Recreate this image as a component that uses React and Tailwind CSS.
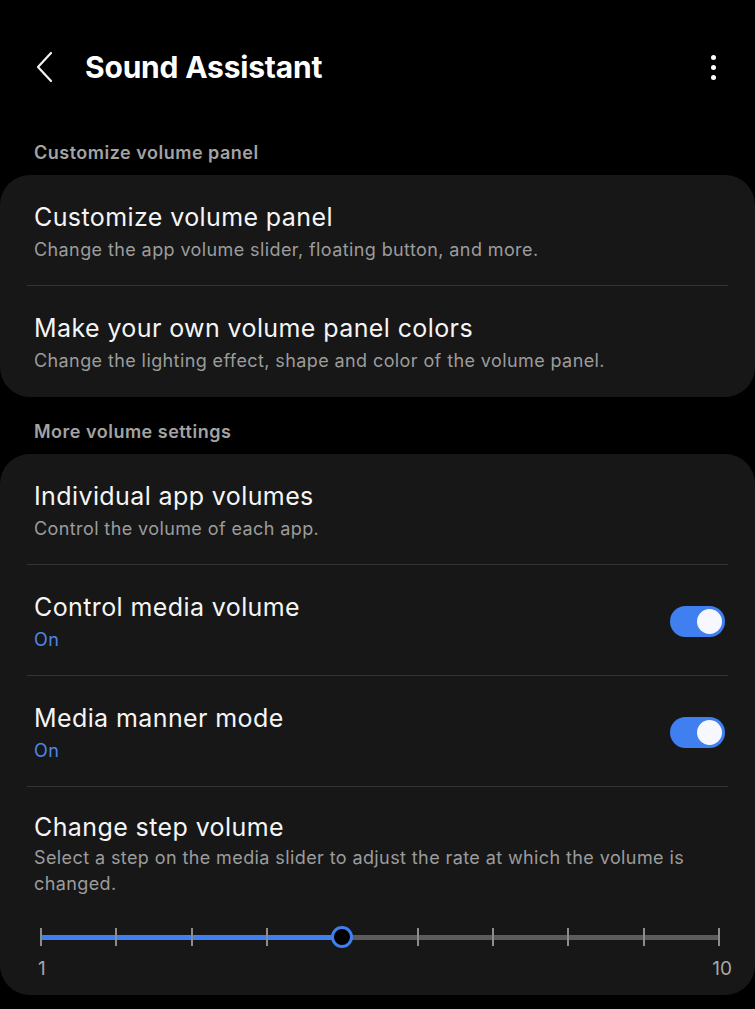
import React from "react";

const font = { fontFamily: "Inter, 'Noto Sans', sans-serif" };

const Toggle = () => (
  <div className="w-[55px] h-[31px] rounded-full bg-[#3f7ff0] flex items-center justify-end pr-[3px] shrink-0 -mt-[4px]">
    <div className="w-[25px] h-[25px] rounded-full bg-[#f7f8ff]" />
  </div>
);

const Row = ({ title, sub, on, divider = true }) => (
  <div className="mx-[27px]">
    <div
      className={
        divider
          ? "flex items-center justify-between pl-[7px] pr-[3px] pt-[25px] pb-[19px]"
          : "flex items-center justify-between pl-[7px] pr-[3px] pt-[25px] pb-[20px]"
      }
    >
      <div>
        <div className="text-[25px] leading-[34px] tracking-[0.4px] text-[#f5f5f5]">{title}</div>
        {sub && (
          <div className="text-[18px] leading-[32px] tracking-[0.4px] text-[#9c9c9c]">{sub}</div>
        )}
        {on && <div className="text-[18px] leading-[32px] tracking-[0.4px] text-[#4f86e6]">On</div>}
      </div>
      {on && <Toggle />}
    </div>
    {divider && <div className="h-px bg-[#333333]" />}
  </div>
);

const ticks = [0, 1, 2, 3, 4, 5, 6, 7, 8, 9];

const StepSlider = () => (
  <div className="pl-[13px] pr-[8px]">
    <div className="relative h-[20px] flex items-center">
      <div className="absolute left-0 right-0 h-[5px] bg-[#5c5c5c] rounded-full" />
      <div className="absolute left-0 w-[44.4%] h-[5px] bg-[#3f7ff0] rounded-full" />
      <div className="relative w-full flex justify-between">
        {ticks.map((t) => (
          <div key={t} className="w-[2px] h-[18px] bg-[#8c8c8c]" />
        ))}
      </div>
      <div className="absolute left-[44.4%] -ml-[11px] w-[22px] h-[22px] rounded-full border-[3px] border-[#3f7ff0] bg-black" />
    </div>
    <div className="flex justify-between mt-[11px] text-[19px] leading-[22px] text-[#a6a6a6] -mr-[12px]">
      <span className="-ml-[2px]">1</span>
      <span>10</span>
    </div>
  </div>
);

export default function App() {
  return (
    <div className="min-h-[1009px] bg-black" style={font}>
      <div className="h-[134px] flex items-center justify-between pl-[35px] pr-[39px]">
        <div className="flex items-center">
          <svg width="20" height="32" viewBox="0 0 20 32" fill="none">
            <path d="M16 2 L3 16 L16 30" stroke="#f2f2f2" strokeWidth="2.2" strokeLinecap="round" strokeLinejoin="round" />
          </svg>
          <h1 className="ml-[30px] text-[30px] leading-[40px] font-bold text-white tracking-[-0.2px]">
            Sound Assistant
          </h1>
        </div>
        <div className="flex flex-col items-center gap-[5px]">
          <div className="w-[5px] h-[5px] rounded-full bg-white" />
          <div className="w-[5px] h-[5px] rounded-full bg-white" />
          <div className="w-[5px] h-[5px] rounded-full bg-white" />
        </div>
      </div>

      <div className="px-[34px] pt-[8px] pb-[11px] text-[18px] leading-[22px] tracking-[0.5px] font-semibold text-[#a3a3a3]">
        Customize volume panel
      </div>
      <div className="bg-[#171717] rounded-[30px]">
        <Row title="Customize volume panel" sub="Change the app volume slider, floating button, and more." />
        <Row
          title="Make your own volume panel colors"
          sub="Change the lighting effect, shape and color of the volume panel."
          divider={false}
        />
      </div>

      <div className="px-[34px] pt-[24px] pb-[11px] text-[18px] leading-[22px] tracking-[0.5px] font-semibold text-[#a3a3a3]">
        More volume settings
      </div>
      <div className="bg-[#171717] rounded-[30px] pb-[15px]">
        <Row title="Individual app volumes" sub="Control the volume of each app." />
        <Row title="Control media volume" on />
        <Row title="Media manner mode" on />
        <div className="mx-[27px]">
          <div className="pl-[7px] pr-[30px] pt-[23px]">
            <div className="text-[25px] leading-[35px] tracking-[0.4px] text-[#f5f5f5]">Change step volume</div>
            <div className="text-[18px] leading-[26px] tracking-[0.4px] text-[#9c9c9c]">
              Select a step on the media slider to adjust the rate at which the volume is changed.
            </div>
          </div>
          <div className="mt-[30px]">
            <StepSlider />
          </div>
        </div>
      </div>
    </div>
  );
}
